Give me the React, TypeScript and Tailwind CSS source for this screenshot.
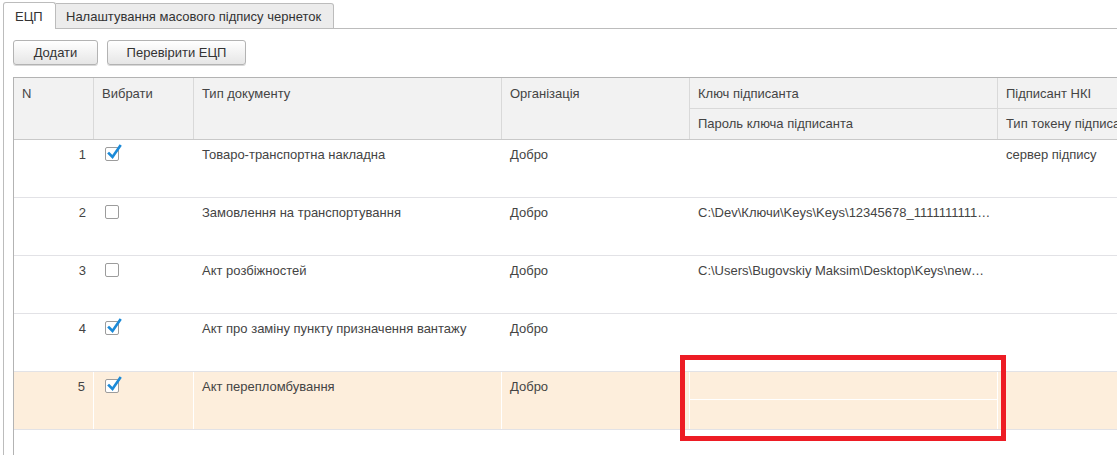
import React from "react";

const rows = [
  { n: 1, checked: true, type: "Товаро-транспортна накладна", org: "Добро", key: "", nki: "сервер підпису", hl: false },
  { n: 2, checked: false, type: "Замовлення на транспортування", org: "Добро", key: "C:\\Dev\\Ключи\\Keys\\Keys\\12345678_1111111111…", nki: "", hl: false },
  { n: 3, checked: false, type: "Акт розбіжностей", org: "Добро", key: "C:\\Users\\Bugovskiy Maksim\\Desktop\\Keys\\new…", nki: "", hl: false },
  { n: 4, checked: true, type: "Акт про заміну пункту призначення вантажу", org: "Добро", key: "", nki: "", hl: false },
  { n: 5, checked: true, type: "Акт перепломбування", org: "Добро", key: "", nki: "", hl: true },
];

function Checkbox({ checked }: { checked: boolean }) {
  return (
    <div className="relative w-[14px] h-[14px] border border-[#9c9c9c] rounded-[2px] bg-white">
      {checked && (
        <svg className="absolute left-[1px] top-[-4px]" width="15" height="16" viewBox="0 0 15 16">
          <path d="M2 9.5 L5.5 13 L13 2" fill="none" stroke="#1b8ad8" strokeWidth="2.6" strokeLinecap="square" />
        </svg>
      )}
    </div>
  );
}

export default function App() {
  return (
    <div className="relative w-[1117px] h-[455px] overflow-hidden bg-white font-['Liberation_Sans',Arial,sans-serif] text-[13px] leading-[15px] text-[#444]">
      {/* Tabs */}
      <div className="flex items-end h-[29px] pl-[3px]">
        <div className="h-[27px] w-[53px] border border-b-0 border-[#bcbcbc] rounded-t-[3px] bg-white flex items-center pl-[11px] text-[#333]">
          ЕЦП
        </div>
        <div className="h-[26px] w-[278px] border border-l-0 border-[#bcbcbc] rounded-tr-[3px] bg-[#ececec] flex items-center pl-[10px] text-[#333]">
          Налаштування масового підпису чернеток
        </div>
        <div className="flex-1 border-b border-[#bcbcbc]" />
      </div>

      {/* Panel */}
      <div className="ml-[3px] h-[426px] border-l border-[#bcbcbc] pl-[9px]">
        <div className="flex gap-[9px] pt-[11px]">
          <button className="h-[25px] w-[85px] rounded-[3px] border border-[#b3b3b3] bg-gradient-to-b from-white to-[#e6e6e6] text-[#333] shadow-[0_1px_0_#d8d8d8]">
            Додати
          </button>
          <button className="h-[25px] w-[139px] rounded-[3px] border border-[#b3b3b3] bg-gradient-to-b from-white to-[#e6e6e6] text-[#333] shadow-[0_1px_0_#d8d8d8]">
            Перевірити ЕЦП
          </button>
        </div>

        {/* Table */}
        <div className="mt-[12px] border-t border-l border-[#b3b3b3] h-[400px]">
          {/* Header */}
          <div className="flex h-[62px] bg-[#f2f2f2] border-b border-[#c9c9c9]">
            <div className="w-[80px] shrink-0 border-r border-[#d9d9d9] pl-[8px] pt-[8px]">N</div>
            <div className="w-[100px] shrink-0 border-r border-[#d9d9d9] pl-[8px] pt-[8px]">Вибрати</div>
            <div className="w-[308px] shrink-0 border-r border-[#d9d9d9] pl-[8px] pt-[8px]">Тип документу</div>
            <div className="w-[188px] shrink-0 border-r border-[#d9d9d9] pl-[8px] pt-[8px]">Організація</div>
            <div className="w-[308px] shrink-0 border-r border-[#d9d9d9] flex flex-col">
              <div className="h-[31px] border-b border-[#d9d9d9] pl-[8px] pt-[8px]">Ключ підписанта</div>
              <div className="flex-1 pl-[8px] pt-[7px]">Пароль ключа підписанта</div>
            </div>
            <div className="flex-1 flex flex-col whitespace-nowrap overflow-hidden">
              <div className="h-[31px] border-b border-[#d9d9d9] pl-[8px] pt-[8px]">Підписант НКІ</div>
              <div className="flex-1 pl-[8px] pt-[7px]">Тип токену підписанта</div>
            </div>
          </div>

          {/* Body */}
          {rows.map((r) => {
            const sep = r.hl ? "border-r border-white" : "";
            return (
              <div
                key={r.n}
                className={`flex h-[58px] border-b border-[#e2e2e6] ${r.hl ? "bg-[#fdeedc]" : "bg-white"}`}
              >
                <div className={`w-[80px] shrink-0 text-right pr-[8px] pt-[7px] ${sep}`}>{r.n}</div>
                <div className={`w-[100px] shrink-0 pl-[11px] pt-[7px] ${sep}`}>
                  <Checkbox checked={r.checked} />
                </div>
                <div className={`w-[308px] shrink-0 pl-[8px] pt-[7px] ${sep}`}>{r.type}</div>
                <div className={`w-[188px] shrink-0 pl-[8px] pt-[7px] ${sep}`}>{r.org}</div>
                <div className={`w-[308px] shrink-0 flex flex-col ${sep}`}>
                  <div className={`h-[28px] pl-[8px] pt-[7px] whitespace-nowrap ${r.hl ? "border-b border-white" : ""}`}>{r.key}</div>
                  <div className="flex-1" />
                </div>
                <div className="flex-1 pl-[8px] pt-[7px] whitespace-nowrap">{r.nki}</div>
              </div>
            );
          })}
        </div>
      </div>

      {/* Red annotation rectangle */}
      <div className="absolute left-[680px] top-[355px] w-[326px] h-[86px] border-[5px] border-[#ed1c24]" />
    </div>
  );
}
